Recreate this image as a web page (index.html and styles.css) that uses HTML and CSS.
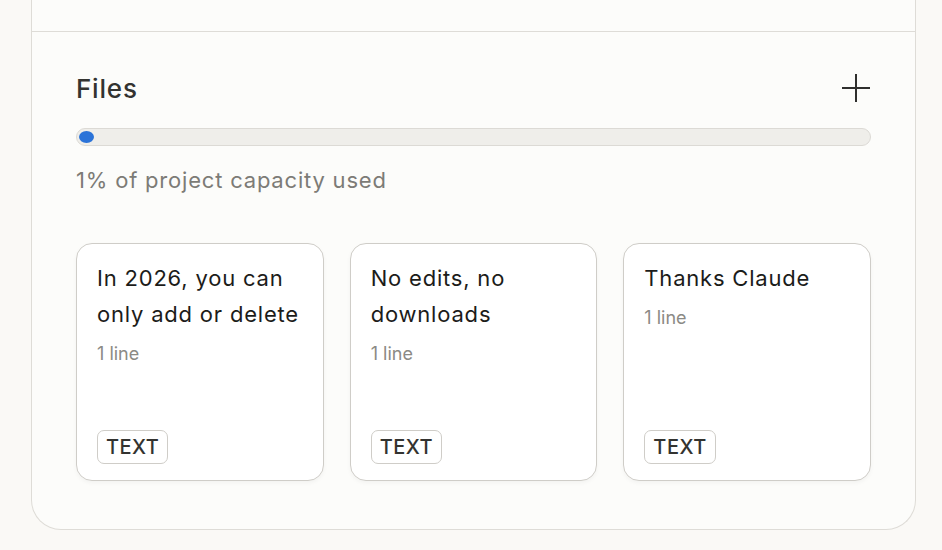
FILE: index.html
```html
<!DOCTYPE html>
<html lang="en">
<head>
    <meta charset="UTF-8">
    <meta name="viewport" content="width=device-width, initial-scale=1.0">
    <title>Project Files</title>
    <link rel="stylesheet" href="styles.css">
</head>
<body>
    <div class="panel">
        <div class="prev-section"></div>

        <div class="files">
            <div class="files-header">
                <h2>Files</h2>
                <button class="add-btn" aria-label="Add file">
                    <svg width="30" height="30" viewBox="0 0 30 30">
                        <path d="M15 1v28M1 15h28" stroke="#2f2f2d" stroke-width="2" fill="none"/>
                    </svg>
                </button>
            </div>

            <div class="capacity-bar">
                <div class="capacity-fill"></div>
            </div>
            <div class="capacity-text">1% of project capacity used</div>

            <div class="file-grid">
                <div class="file-card">
                    <div class="file-name">In 2026, you can only add or delete</div>
                    <div class="file-meta">1 line</div>
                    <span class="file-type">TEXT</span>
                </div>
                <div class="file-card">
                    <div class="file-name">No edits, no downloads</div>
                    <div class="file-meta">1 line</div>
                    <span class="file-type">TEXT</span>
                </div>
                <div class="file-card">
                    <div class="file-name">Thanks Claude</div>
                    <div class="file-meta">1 line</div>
                    <span class="file-type">TEXT</span>
                </div>
            </div>
        </div>
    </div>
</body>
</html>
```

FILE: styles.css
```css
body {
    font-family: 'Inter', 'Liberation Sans', sans-serif;
    background-color: #faf9f6;
    color: #2f2f2d;
    margin: 0;
    padding: 0;
}
.panel {
    width: 883px;
    margin-left: 31px;
    background: #fcfcfa;
    border: 1px solid #dedcd7;
    border-top: none;
    border-radius: 0 0 30px 30px;
}
.prev-section {
    height: 31px;
    border-bottom: 1px solid #dedcd7;
}
.files {
    padding: 38px 44px 48px 44px;
}
.files-header {
    display: flex;
    align-items: center;
    justify-content: space-between;
    height: 36px;
}
h2 {
    margin: 0;
    font-size: 26px;
    font-weight: 500;
    letter-spacing: 0.8px;
    color: #333330;
}
.add-btn {
    background: none;
    border: none;
    padding: 0;
    width: 30px;
    height: 30px;
    cursor: pointer;
}
.capacity-bar {
    margin-top: 22px;
    border: 1px solid #dcdad5;
    border-radius: 9px;
    background: #efeeea;
    padding: 2px;
    height: 12px;
}
.capacity-fill {
    width: 15px;
    height: 12px;
    border-radius: 50%;
    background: #2b73d8;
}
.capacity-text {
    margin-top: 19px;
    font-size: 22px;
    line-height: 30px;
    letter-spacing: 0.8px;
    color: #7c7b76;
}
.file-grid {
    display: grid;
    grid-template-columns: repeat(3, 1fr);
    gap: 26px;
    margin-top: 48px;
}
.file-card {
    display: flex;
    flex-direction: column;
    align-items: flex-start;
    height: 238px;
    box-sizing: border-box;
    padding: 16px 20px 16px 20px;
    background: #ffffff;
    border: 1px solid #cfcdc8;
    border-radius: 16px;
    box-shadow: 0 2px 4px rgba(0, 0, 0, 0.04);
}
.file-name {
    font-size: 22px;
    line-height: 36px;
    letter-spacing: 0.8px;
    color: #1c1c1a;
}
.file-meta {
    margin-top: 10px;
    font-size: 18px;
    line-height: 24px;
    color: #8b8a85;
}
.file-type {
    margin-top: auto;
    padding: 0 8px;
    height: 32px;
    line-height: 32px;
    font-size: 20px;
    font-weight: 500;
    letter-spacing: 0.5px;
    color: #333330;
    border: 1px solid #cfcdc8;
    border-radius: 7px;
}
```
